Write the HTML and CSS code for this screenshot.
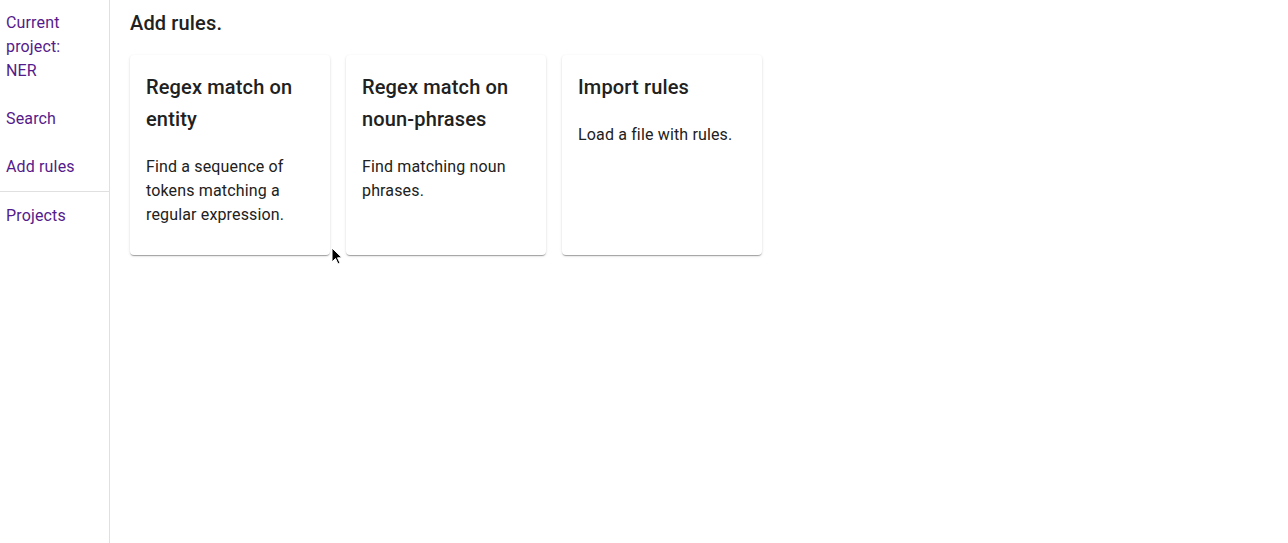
FILE: index.html
```html
<!DOCTYPE html>
<html>
<head>
<meta charset="utf-8">
<link rel="stylesheet" href="styles.css">
</head>
<body>
<div class="app">
  <nav class="sidebar">
    <a class="nav-item" href="#">Current project: NER</a>
    <a class="nav-item" href="#">Search</a>
    <a class="nav-item" href="#">Add rules</a>
    <div class="divider"></div>
    <a class="nav-item" href="#">Projects</a>
  </nav>
  <main class="main">
    <h1 class="page-title">Add rules.</h1>
    <div class="cards">
      <div class="card">
        <h2 class="card-title">Regex match on entity</h2>
        <p class="card-text">Find a sequence of tokens matching a regular expression.</p>
      </div>
      <div class="card">
        <h2 class="card-title">Regex match on noun-phrases</h2>
        <p class="card-text">Find matching noun phrases.</p>
      </div>
      <div class="card">
        <h2 class="card-title">Import rules</h2>
        <p class="card-text">Load a file with rules.</p>
      </div>
    </div>
  </main>
</div>
<svg class="cursor" width="12" height="19" viewBox="0 0 12 19">
  <path d="M1 1 L1 15 L4.5 11.5 L7 17 L9 16 L6.5 10.8 L11 10.8 Z" fill="#000" stroke="#fff" stroke-width="1"/>
</svg>
</body>
</html>
```
FILE: styles.css
```css
html, body {
  margin: 0;
  padding: 0;
  background: #fff;
  font-family: Roboto, "Liberation Sans", sans-serif;
  color: #212121;
  letter-spacing: 0.15px;
}
.app {
  display: flex;
  min-height: 543px;
}
.sidebar {
  width: 109px;
  border-right: 1px solid #e0e0e0;
  display: flex;
  flex-direction: column;
  padding-top: 11px;
}
.nav-item {
  display: block;
  color: #551a8b;
  text-decoration: none;
  font-size: 16px;
  line-height: 24px;
  padding: 0 6px;
  margin-bottom: 24px;
  width: 70px;
}
.nav-item:nth-child(3) {
  margin-bottom: 12px;
}
.divider {
  height: 1px;
  background: #e0e0e0;
  margin-bottom: 12px;
}
.main {
  flex: 1;
  padding: 7px 20px 0 20px;
}
.page-title {
  margin: 0 0 16px 0;
  font-size: 20px;
  line-height: 32px;
  font-weight: 500;
  color: #212121;
}
.cards {
  display: flex;
  gap: 16px;
}
.card {
  width: 200px;
  height: 200px;
  box-sizing: border-box;
  padding: 16px;
  background: #fff;
  border-radius: 4px;
  box-shadow: 0 2px 1px -1px rgba(0,0,0,0.2), 0 1px 1px 0 rgba(0,0,0,0.14), 0 1px 3px 0 rgba(0,0,0,0.12);
}
.card-title {
  margin: 0 0 20px 0;
  font-size: 20px;
  line-height: 32px;
  font-weight: 500;
  color: #212121;
}
.card-text {
  margin: 0;
  font-size: 16px;
  line-height: 24px;
  color: #212121;
}
.cursor {
  position: absolute;
  left: 331px;
  top: 247px;
}
```
